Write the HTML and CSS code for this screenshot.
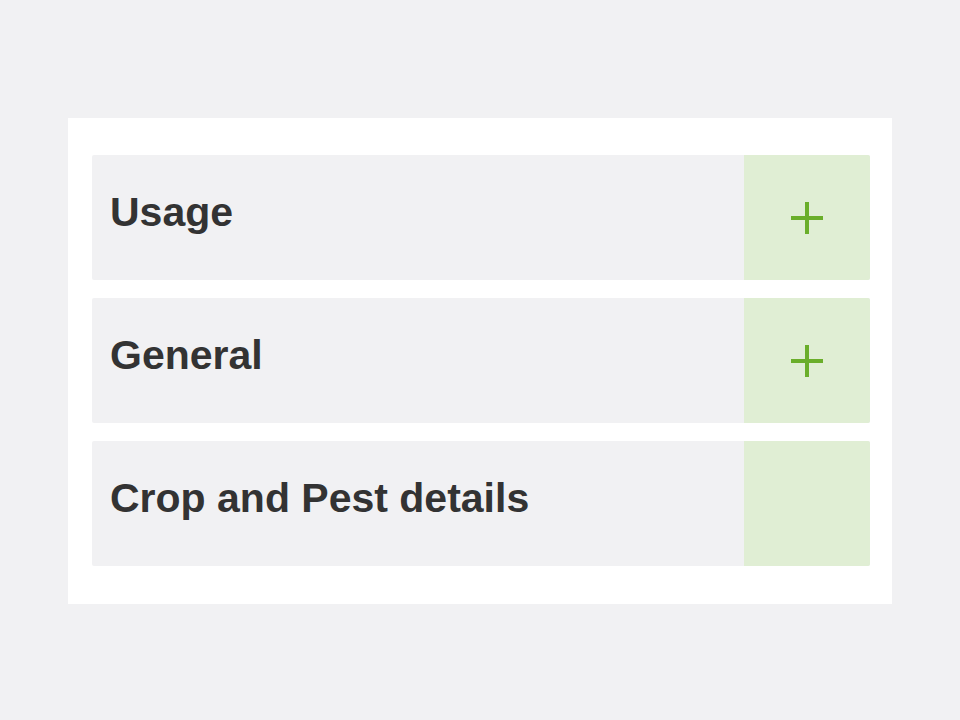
FILE: index.html
```html
<!DOCTYPE html>
<html lang="en">
<head>
<meta charset="utf-8">
<title>Accordion</title>
<link rel="stylesheet" href="styles.css">
</head>
<body>
<div class="card">
  <div class="row">
    <div class="title">Usage</div>
    <div class="toggle">
      <svg width="32" height="32" viewBox="0 0 32 32"><path d="M16 0V32M0 16H32" stroke="#6aae2a" stroke-width="4" fill="none"/></svg>
    </div>
  </div>
  <div class="row">
    <div class="title">General</div>
    <div class="toggle">
      <svg width="32" height="32" viewBox="0 0 32 32"><path d="M16 0V32M0 16H32" stroke="#6aae2a" stroke-width="4" fill="none"/></svg>
    </div>
  </div>
  <div class="row">
    <div class="title">Crop and Pest details</div>
    <div class="toggle"></div>
  </div>
</div>
</body>
</html>
```
FILE: styles.css
```css
html, body {
  margin: 0;
  padding: 0;
  background: #f1f1f3;
}
body {
  font-family: "Liberation Sans", Arial, sans-serif;
  padding: 118px 0 0 68px;
}
.card {
  width: 778px;
  background: #ffffff;
  padding: 37px 22px 38px 24px;
  display: flex;
  flex-direction: column;
  gap: 18px;
}
.row {
  height: 125px;
  display: flex;
  align-items: center;
  background: #f1f1f3;
  border-radius: 2px;
  overflow: hidden;
}
.title {
  flex: 1;
  padding-left: 18px;
  padding-bottom: 10px;
  font-size: 41px;
  font-weight: bold;
  color: #333333;
}
.toggle {
  width: 126px;
  height: 100%;
  background: #e0eed4;
  display: flex;
  align-items: center;
  justify-content: center;
}
.toggle svg {
  display: block;
}
```
